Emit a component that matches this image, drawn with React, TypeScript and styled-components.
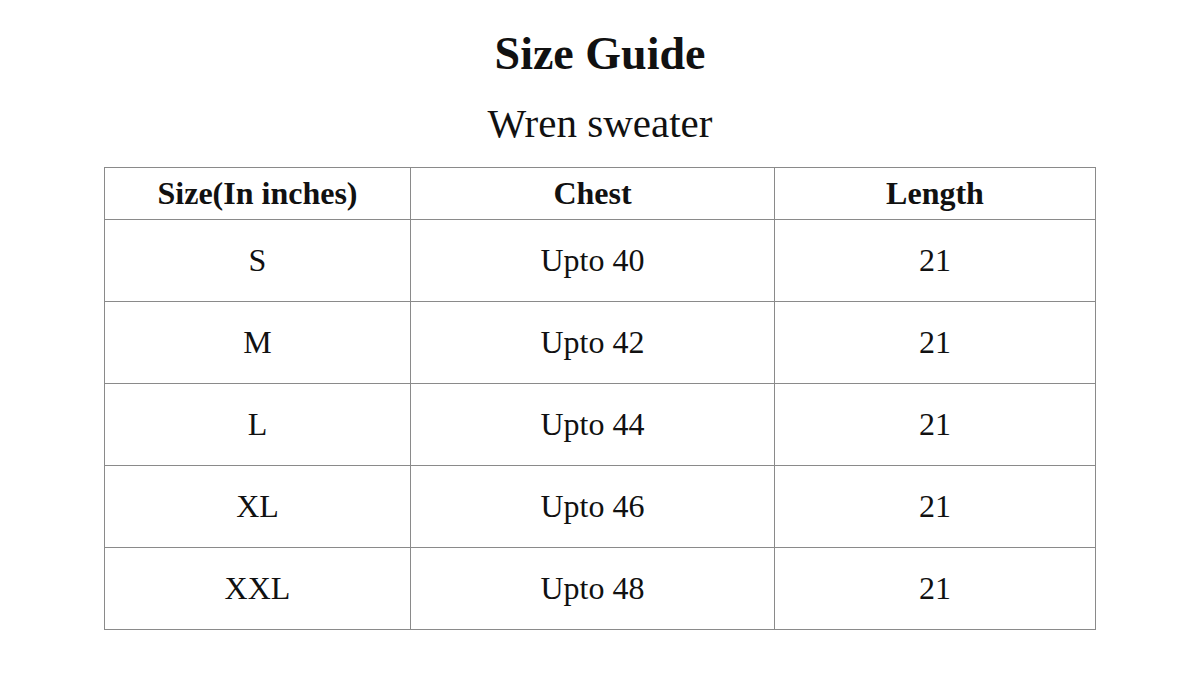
import React from "react";
import styled, { createGlobalStyle } from "styled-components";

const Global = createGlobalStyle`
  html, body { margin: 0; padding: 0; background: #fff; }
  body { font-family: "Liberation Serif", "DejaVu Serif", serif; color: #111; }
`;

const Page = styled.main`
  width: 1200px;
  height: 675px;
  display: flex;
  flex-direction: column;
  align-items: center;
  box-sizing: border-box;
  padding-top: 26px;
`;

const Title = styled.h1`
  margin: 0;
  font-size: 46px;
  font-weight: 700;
  line-height: 56px;
  color: #111;
`;

const Subtitle = styled.h2`
  margin: 16px 0 0;
  font-size: 41px;
  font-weight: 400;
  line-height: 50px;
  color: #111;
`;

const Table = styled.table`
  margin-top: 19px;
  width: 988px;
  border-collapse: collapse;
  table-layout: fixed;
`;

const Th = styled.th<{ $w: number }>`
  width: ${(p) => p.$w}px;
  height: 51px;
  border: 1.5px solid #8a8a8a;
  font-size: 32px;
  font-weight: 700;
  text-align: center;
  vertical-align: middle;
  padding: 0;
`;

const Td = styled.td`
  height: 81px;
  border: 1.5px solid #8a8a8a;
  font-size: 32px;
  font-weight: 400;
  text-align: center;
  vertical-align: middle;
  padding: 0;
`;

const rows = [
  ["S", "Upto 40", "21"],
  ["M", "Upto 42", "21"],
  ["L", "Upto 44", "21"],
  ["XL", "Upto 46", "21"],
  ["XXL", "Upto 48", "21"],
];

export default function App() {
  return (
    <>
      <Global />
      <Page>
        <Title>Size Guide</Title>
        <Subtitle>Wren sweater</Subtitle>
        <Table>
          <thead>
            <tr>
              <Th $w={305}>Size(In inches)</Th>
              <Th $w={363}>Chest</Th>
              <Th $w={320}>Length</Th>
            </tr>
          </thead>
          <tbody>
            {rows.map((r) => (
              <tr key={r[0]}>
                {r.map((c, i) => (
                  <Td key={i}>{c}</Td>
                ))}
              </tr>
            ))}
          </tbody>
        </Table>
      </Page>
    </>
  );
}
